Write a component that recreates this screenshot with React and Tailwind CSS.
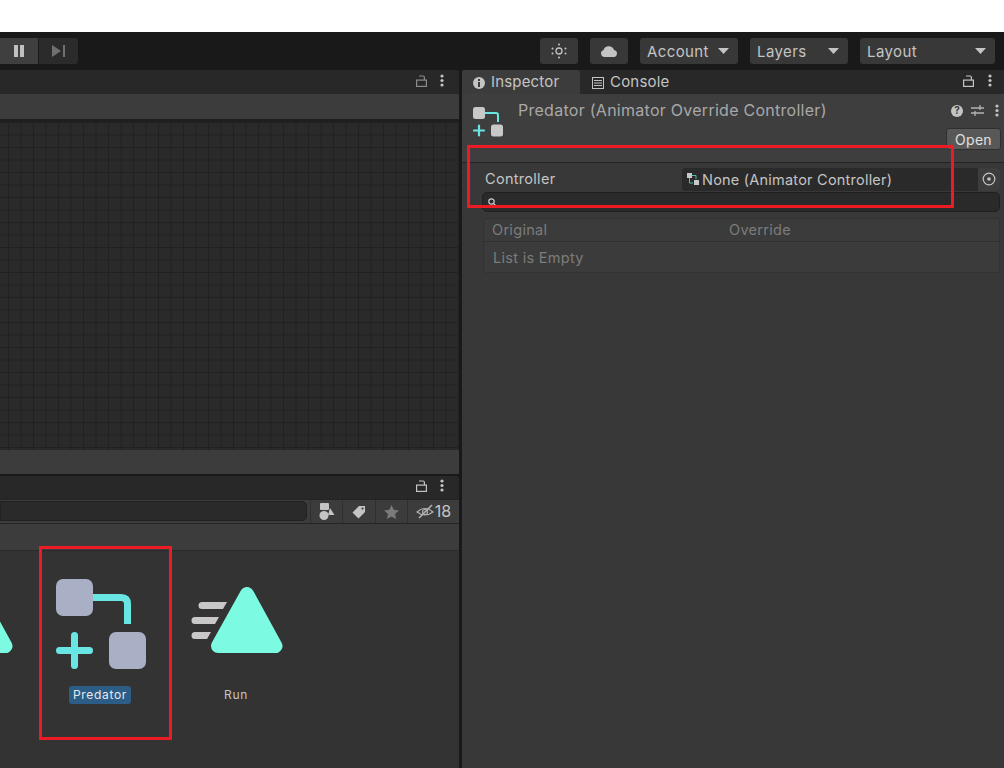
function LockIcon({ className }) {
  return (
    <svg width="11" height="13" viewBox="0 0 11 13" className={className} fill="none" stroke="currentColor" strokeWidth="1.2">
      <rect x="0.6" y="6.1" width="9.8" height="6.3" />
      <path d="M3 2 H7 Q8.4 2 8.4 3.4 V6" />
    </svg>
  );
}

function DotsIcon({ className }) {
  return (
    <svg width="4" height="13" viewBox="0 0 4 13" className={className} fill="currentColor">
      <circle cx="2" cy="2" r="1.6" />
      <circle cx="2" cy="6.5" r="1.6" />
      <circle cx="2" cy="11" r="1.6" />
    </svg>
  );
}

function Caret() {
  return (
    <svg width="11" height="6" viewBox="0 0 11 6" fill="#c4c4c4">
      <path d="M0 0 H11 L5.5 6 Z" />
    </svg>
  );
}

function DropButton({ label, className }) {
  return (
    <div className={`h-[26px] bg-[#383838] rounded-[3px] flex items-center justify-between pl-[7px] pr-[9px] text-[15px] tracking-[0.4px] text-[#c4c4c4] ${className}`}>
      <span className="pt-[2px]">{label}</span>
      <Caret />
    </div>
  );
}

function TopBar() {
  return (
    <div className="h-[38px] bg-[#191919] flex items-center justify-between pr-[9px]">
      <div className="flex gap-[1px]">
        <div className="w-[38px] h-[26px] bg-[#3f3f3f] flex items-center justify-center gap-[2px]">
          <div className="w-[4px] h-[12px] bg-[#c0c0c0]" />
          <div className="w-[4px] h-[12px] bg-[#c0c0c0]" />
        </div>
        <div className="w-[39px] h-[26px] bg-[#2b2b2b] rounded-r-[3px] flex items-center justify-center">
          <svg width="13" height="12" viewBox="0 0 13 12" fill="#707070">
            <path d="M0 0 L9 6 L0 12 Z" />
            <rect x="11" y="0" width="2" height="12" />
          </svg>
        </div>
      </div>
      <div className="flex items-center">
        <div className="w-[38px] h-[26px] bg-[#383838] rounded-[3px] flex items-center justify-center">
          <svg width="16" height="16" viewBox="0 0 16 16" fill="#c4c4c4">
            <circle cx="8" cy="8" r="3" fill="none" stroke="#c4c4c4" strokeWidth="1.3" />
            <circle cx="8" cy="1.5" r="1" />
            <circle cx="8" cy="14.5" r="1" />
            <circle cx="1.5" cy="5.5" r="1" />
            <circle cx="14.5" cy="5.5" r="1" />
            <circle cx="1.5" cy="10.5" r="1" />
            <circle cx="14.5" cy="10.5" r="1" />
          </svg>
        </div>
        <div className="w-[38px] h-[26px] bg-[#383838] rounded-[3px] flex items-center justify-center ml-[12px]">
          <svg width="18" height="12" viewBox="0 0 18 12" fill="#c4c4c4">
            <path d="M4 12 A3.5 3.5 0 0 1 3.4 5.2 A5.6 5.6 0 0 1 14 5 A3.6 3.6 0 0 1 14.4 12 Z" />
          </svg>
        </div>
        <DropButton label="Account" className="w-[98px] ml-[12px]" />
        <DropButton label="Layers" className="w-[98px] ml-[12px]" />
        <DropButton label="Layout" className="w-[135px] ml-[12px]" />
      </div>
    </div>
  );
}

function SceneColumn() {
  return (
    <div className="w-[459px] flex flex-col">
      <div className="h-[24px] bg-[#282828] rounded-tr-[3px] flex items-center justify-end gap-[13px] pr-[15px] pb-[3px]">
        <LockIcon className="text-[#8a8a8a]" />
        <DotsIcon className="text-[#c4c4c4]" />
      </div>
      <div className="h-[25px] bg-[#3c3c3c]" />
      <div className="h-[3px] bg-[#1f1f1f]" />
      <div className="h-[328px] bg-[#2a2a2a] bg-[linear-gradient(#212121_1px,transparent_1px),linear-gradient(90deg,#212121_1px,transparent_1px)] bg-[size:12.5px_12.5px] bg-[position:8px_0px]" />
      <div className="h-[24px] bg-[#3c3c3c]" />
      <div className="h-[2px] bg-[#191919]" />
      <div className="h-[23px] bg-[#282828] rounded-tr-[3px] flex items-center justify-end gap-[13px] pr-[15px] pb-[5px]">
        <LockIcon className="text-[#c4c4c4]" />
        <DotsIcon className="text-[#c4c4c4]" />
      </div>
      <ProjectToolbar />
      <div className="h-[27px] bg-[#3c3c3c] border-b border-[#2a2a2a]" />
      <AssetGrid />
    </div>
  );
}

function ProjectToolbar() {
  return (
    <div className="h-[25px] bg-[#3c3c3c] border-y border-[#242424] flex items-stretch">
      <div className="w-[307px] my-[1px] h-[20px] bg-[#2a2a2a] border border-[#212121] rounded-r-[5px]" />
      <div className="w-[3px]" />
      <div className="w-[33px] border-x border-[#2f2f2f] flex items-center justify-center">
        <svg width="16" height="17" viewBox="0 0 16 17" fill="#c4c4c4">
          <rect x="1" y="0" width="9" height="7" rx="1" />
          <circle cx="5" cy="12.5" r="4.5" />
          <path d="M11 5 L15.5 12 H9 Z" />
        </svg>
      </div>
      <div className="w-[33px] border-r border-[#2f2f2f] flex items-center justify-center">
        <svg width="14" height="14" viewBox="0 0 14 14" fill="#c4c4c4">
          <path fillRule="evenodd" d="M7 1 H13 V7 L6.500 13.500 L0.500 7.500 Z M10.500 2.600 a1 1 0 1 0 0.010 0 Z" />
        </svg>
      </div>
      <div className="w-[32px] border-r border-[#2f2f2f] flex items-center justify-center">
        <svg width="15" height="14" viewBox="0 0 15 14" fill="#7a7a7a">
          <path d="M7.500 0 L9.700 4.800 L15 5.400 L11 9 L12.100 14 L7.500 11.400 L2.900 14 L4 9 L0 5.400 L5.300 4.800 Z" />
        </svg>
      </div>
      <div className="flex-1 flex items-center justify-center gap-[1px] pb-[1px] text-[16px] text-[#c4c4c4]">
        <svg width="18" height="15" viewBox="0 0 18 15" fill="none" stroke="#b0b0b0" strokeWidth="1.200">
          <path d="M1 8 Q9 1 17 8 Q9 14 1 8 Z" />
          <circle cx="9" cy="8" r="2.500" />
          <path d="M3 14 L16 1" strokeWidth="1.600" />
        </svg>
        <span>18</span>
      </div>
    </div>
  );
}

function PredatorIcon() {
  return (
    <svg width="100" height="100" viewBox="0 0 100 100">
      <rect x="6" y="5" width="37" height="37" rx="7" fill="#a9b0c5" />
      <path d="M43 23.500 H71 Q77.500 23.500 77.500 30 V50" fill="none" stroke="#69e6e4" strokeWidth="7" />
      <path d="M9.500 76.500 H39.500 M24.500 61.500 V91.500" fill="none" stroke="#69e6e4" strokeWidth="7" strokeLinecap="round" />
      <rect x="59" y="58" width="37" height="37" rx="7" fill="#a9b0c5" />
    </svg>
  );
}

function RunIcon({ bars }) {
  return (
    <svg width="100" height="100" viewBox="0 0 100 100">
      {bars && (
        <g fill="#c8c8c8">
          <path d="M16 28 H41 L37 35 H16 a3.500 3.500 0 0 1 0-7 Z" />
          <path d="M9 43 H33 L29 50 H9 a3.500 3.500 0 0 1 0-7 Z" />
          <path d="M9 58 H25 L21 65 H9 a3.500 3.500 0 0 1 0-7 Z" />
        </g>
      )}
      <path d="M61 20 L89.500 72 H32 Z" fill="#7cfbe2" stroke="#7cfbe2" strokeWidth="14" strokeLinejoin="round" />
    </svg>
  );
}

function AssetGrid() {
  return (
    <div className="flex-1 bg-[#333333] flex items-start -ml-[100px] pt-[23px]">
      <div className="w-[132px] flex justify-center">
        <RunIcon />
      </div>
      <div className="w-[136px] flex flex-col items-center">
        <PredatorIcon />
        <div className="mt-[12px] h-[18px] w-[62px] bg-[#2c5d87] rounded-[3px] flex items-center justify-center text-[12px] tracking-[0.7px] text-[#e8e8e8]">
          Predator
        </div>
      </div>
      <div className="w-[136px] flex flex-col items-center">
        <RunIcon bars />
        <div className="mt-[12px] h-[18px] flex items-center text-[12px] tracking-[0.7px] text-[#c4c4c4]">
          Run
        </div>
      </div>
    </div>
  );
}

function InspectorHeader() {
  return (
    <div className="h-[69px] bg-[#3e3e3e] border-b border-[#232323] flex pl-[11px] pr-[3px]">
      <svg width="30" height="30" viewBox="0 0 30 30" className="mt-[13px] shrink-0">
        <rect x="0" y="0" width="12" height="12" rx="2.500" fill="#c8c8c8" />
        <path d="M12 6 H23 Q25 6 25 8 V15" fill="none" stroke="#69e6e4" strokeWidth="2" />
        <path d="M1 23.500 H11 M6 18.500 V28.500" fill="none" stroke="#69e6e4" strokeWidth="2.200" strokeLinecap="round" />
        <rect x="18" y="17.500" width="12" height="12" rx="2.500" fill="#c8c8c8" />
      </svg>
      <div className="ml-[15px] pt-[6px] text-[16px] tracking-[0.27px] text-[#a8a8a8] leading-[20px]">
        Predator (Animator Override Controller)
      </div>
      <div className="ml-auto flex flex-col items-end">
        <div className="flex items-center mt-[10px] pr-[2px]">
          <div className="w-[12px] h-[12px] rounded-full bg-[#c4c4c4] flex items-center justify-center text-[10px] font-bold text-[#3e3e3e]">?</div>
          <svg width="13" height="13" viewBox="0 0 13 13" stroke="#b4b4b4" strokeWidth="1.300" fill="none" className="ml-[8px]">
            <path d="M0 4 H13 M0 9 H13 M9 1 V6 M4 7 V12" />
          </svg>
          <DotsIcon className="text-[#c4c4c4] ml-[11px]" />
        </div>
        <div className="mt-[11px] w-[55px] h-[22px] bg-[#585858] border border-[#2f2f2f] rounded-[3px] flex items-center justify-center text-[14px] tracking-[0.3px] text-[#e0e0e0]">
          Open
        </div>
      </div>
    </div>
  );
}

function InspectorColumn() {
  return (
    <div className="flex-1 flex flex-col bg-[#383838]">
      <div className="h-[24px] bg-[#282828] flex items-stretch">
        <div className="w-[118px] bg-[#3c3c3c] rounded-t-[3px] flex items-center pl-[11px] gap-[6px] pt-[1px] text-[15px] tracking-[0.17px] text-[#c4c4c4]">
          <svg width="12" height="12" viewBox="0 0 12 12">
            <circle cx="6" cy="6" r="6" fill="#c4c4c4" />
            <rect x="5" y="5" width="2" height="5" fill="#3c3c3c" />
            <rect x="5" y="2" width="2" height="2" fill="#3c3c3c" />
          </svg>
          Inspector
        </div>
        <div className="flex items-center pl-[12px] gap-[6px] pt-[1px] text-[15px] tracking-[0.2px] text-[#c4c4c4]">
          <svg width="12" height="12" viewBox="0 0 12 12" fill="none" stroke="#c4c4c4" strokeWidth="1">
            <rect x="0.500" y="0.500" width="11" height="11" />
            <path d="M2 3.500 H10 M2 6 H10 M2 8.500 H10" />
          </svg>
          Console
        </div>
        <div className="ml-auto flex items-center gap-[14px] pr-[12px] pb-[3px]">
          <LockIcon className="text-[#c4c4c4]" />
          <DotsIcon className="text-[#c4c4c4]" />
        </div>
      </div>
      <InspectorHeader />
      <div className="flex-1 bg-[#383838] pl-[20px] pr-[4px]">
        <div className="flex items-center h-[24px] mt-[4px] pl-[3px]">
          <div className="w-[197px] text-[14.500px] tracking-[0.3px] text-[#c4c4c4]">Controller</div>
          <div className="flex-1 h-[23px] bg-[#2a2a2a] rounded-[3px] flex items-center pl-[5px] text-[14.500px] tracking-[0.22px] text-[#c4c4c4]">
            <svg width="12" height="12" viewBox="0 0 12 12" className="shrink-0 mr-[3px]">
              <rect x="0" y="0" width="5" height="5" fill="#c8c8c8" />
              <path d="M5 2.500 H9 V6 M2.500 5 V10 H6" fill="none" stroke="#4fbfa8" strokeWidth="1" />
              <rect x="7" y="7" width="5" height="5" fill="#c8c8c8" />
            </svg>
            <span className="pt-[1px]">None (Animator Controller)</span>
            <div className="ml-auto w-[22px] h-[23px] bg-[#3d3d3d] rounded-r-[3px] flex items-center justify-center">
              <svg width="14" height="14" viewBox="0 0 14 14" fill="none" stroke="#c4c4c4" strokeWidth="1.200">
                <circle cx="7" cy="7" r="5.800" />
                <circle cx="7" cy="7" r="1.800" fill="#c4c4c4" stroke="none" />
              </svg>
            </div>
          </div>
        </div>
        <div className="h-[20px] mt-[1px] bg-[#2a2a2a] border border-[#1f1f1f] rounded-[5px] flex items-center pl-[5px]">
          <svg width="9" height="9" viewBox="0 0 9 9" fill="none" stroke="#d0d0d0" strokeWidth="1.200">
            <circle cx="3.500" cy="3.500" r="2.700" />
            <path d="M5.500 5.500 L8.500 8.500" />
          </svg>
        </div>
        <div className="mt-[6px] ml-[1px] h-[55px] border border-[#323232] rounded-[3px] bg-[#3b3b3b] text-[14.500px] tracking-[0.3px] text-[#7c7c7c]">
          <div className="h-[23px] border-b border-[#303030] flex items-center pl-[8px]">
            <div className="w-[237px]">Original</div>
            <div>Override</div>
          </div>
          <div className="h-[30px] flex items-center pl-[9px] pt-[1px]">List is Empty</div>
        </div>
      </div>
    </div>
  );
}

export default function App() {
  return (
    <div className="relative w-[1004px] h-[768px] overflow-hidden bg-[#191919] font-['Inter',sans-serif]">
      <div className="h-[32px] bg-white" />
      <TopBar />
      <div className="flex h-[698px]">
        <SceneColumn />
        <div className="w-[3px] bg-[#191919]" />
        <InspectorColumn />
      </div>
      {/* red annotation boxes */}
      <div className="absolute left-[467px] top-[145px] w-[487px] h-[63px] border-[3px] border-[#ed1c24]" />
      <div className="absolute left-[39px] top-[546px] w-[133px] h-[194px] border-[3px] border-[#ed1c24]" />
    </div>
  );
}
